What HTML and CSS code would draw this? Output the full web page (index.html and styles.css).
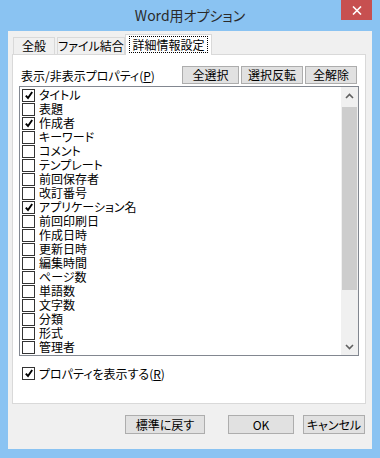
FILE: index.html
```html
<!DOCTYPE html>
<html lang="ja">
<head>
<meta charset="utf-8">
<link rel="stylesheet" href="styles.css">
</head>
<body>
<div class="window">
  <div class="titlebar">
    <span class="title">Word用オプション</span>
    <div class="close"><svg width="10" height="9" viewBox="0 0 10 9"><path d="M1 0.5 L9 8.5 M9 0.5 L1 8.5" stroke="#fff" stroke-width="1.6" fill="none"/></svg></div>
  </div>
  <div class="client">
    <div class="tabs">
      <div class="tab t1">全般</div>
      <div class="tab t2">ファイル結合</div>
      <div class="tab active"><span class="focus">詳細情報設定</span></div>
    </div>
    <div class="panel">
      <div class="toolbar">
        <span class="label">表示/非表示プロパティ(<u>P</u>)</span>
        <div class="tbtns">
          <button class="btn b-all">全選択</button>
          <button class="btn b-inv">選択反転</button>
          <button class="btn b-none">全解除</button>
        </div>
      </div>
      <div class="listbox">
        <ul class="items">
          <li><span class="cb on"></span><span class="txt">タイトル</span></li>
          <li><span class="cb"></span><span class="txt">表題</span></li>
          <li><span class="cb on"></span><span class="txt">作成者</span></li>
          <li><span class="cb"></span><span class="txt">キーワード</span></li>
          <li><span class="cb"></span><span class="txt">コメント</span></li>
          <li><span class="cb"></span><span class="txt">テンプレート</span></li>
          <li><span class="cb"></span><span class="txt">前回保存者</span></li>
          <li><span class="cb"></span><span class="txt">改訂番号</span></li>
          <li><span class="cb on"></span><span class="txt">アプリケーション名</span></li>
          <li><span class="cb"></span><span class="txt">前回印刷日</span></li>
          <li><span class="cb"></span><span class="txt">作成日時</span></li>
          <li><span class="cb"></span><span class="txt">更新日時</span></li>
          <li><span class="cb"></span><span class="txt">編集時間</span></li>
          <li><span class="cb"></span><span class="txt">ページ数</span></li>
          <li><span class="cb"></span><span class="txt">単語数</span></li>
          <li><span class="cb"></span><span class="txt">文字数</span></li>
          <li><span class="cb"></span><span class="txt">分類</span></li>
          <li><span class="cb"></span><span class="txt">形式</span></li>
          <li><span class="cb"></span><span class="txt">管理者</span></li>
        </ul>
        <div class="scrollbar">
          <div class="arrow"><svg width="9" height="6" viewBox="0 0 9 6"><path d="M1 5 L4.5 1.5 L8 5" stroke="#606060" stroke-width="1.6" fill="none"/></svg></div>
          <div class="track"><div class="thumb"></div></div>
          <div class="arrow"><svg width="9" height="6" viewBox="0 0 9 6"><path d="M1 1 L4.5 4.5 L8 1" stroke="#606060" stroke-width="1.6" fill="none"/></svg></div>
        </div>
      </div>
      <div class="showprops"><span class="cb on"></span>プロパティを表示する(<u>R</u>)</div>
    </div>
    <div class="footer">
      <button class="btn f-reset">標準に戻す</button>
      <button class="btn f-ok">OK</button>
      <button class="btn f-cancel">キャンセル</button>
    </div>
  </div>
</div>
</body>
</html>
```
FILE: styles.css
```css
* { box-sizing: border-box; }
html, body { margin: 0; padding: 0; }
body {
  font-family: "Noto Sans CJK JP", "Noto Sans", sans-serif;
  font-size: 12px;
  color: #000;
  font-feature-settings: "palt";
}
.window {
  width: 380px;
  height: 458px;
  background: #8ac3f2;
  display: flex;
  flex-direction: column;
  position: relative;
}
.titlebar {
  height: 31px;
  display: flex;
  align-items: center;
  justify-content: center;
}
.title {
  font-size: 14px;
  color: #2a2a2a;
  margin-top: -1px;
}
.close {
  position: absolute;
  top: 0;
  right: 8px;
  width: 31px;
  height: 20px;
  background: #c75050;
  display: flex;
  align-items: center;
  justify-content: center;
}
.client {
  margin: 0 8px;
  height: 418px;
  background: #f0f0f0;
  padding: 3px 6px 0 4px;
  display: flex;
  flex-direction: column;
}
.tabs {
  display: flex;
  align-items: flex-end;
  height: 20px;
  padding-left: 1px;
  position: relative;
  z-index: 1;
}
.tab {
  height: 17px;
  border: 1px solid #d9d9d9;
  border-bottom: none;
  background: #f0f0f0;
  display: flex;
  align-items: center;
  justify-content: center;
  line-height: 1;
}
.t1 { width: 42px; }
.t2 { width: 68px; margin-left: 2px; }
.tab.active {
  width: 87px;
  height: 21px;
  margin-bottom: -1px;
  margin-left: 0;
  background: #ffffff;
  border-color: #d9d9d9;
  padding-bottom: 1px;
}
.focus {
  border: 1px dotted #000;
  padding: 1px 2px;
  line-height: 13px;
}
.panel {
  height: 350px;
  border: 1px solid #d9d9d9;
  background: #ffffff;
  padding: 11px 6px 0 6px;
  display: flex;
  flex-direction: column;
}
.toolbar {
  display: flex;
  justify-content: space-between;
  align-items: center;
  height: 18px;
  padding-right: 2px;
}
.label { margin-left: 2px; margin-top: 1px; }
u { text-decoration: underline; text-underline-offset: 1px; }
.tbtns { display: flex; gap: 2px; }
.btn {
  font: inherit;
  font-feature-settings: "palt";
  background: #e1e1e1;
  border: 1px solid #adadad;
  height: 18px;
  padding: 0;
  color: #000;
  line-height: 1;
  display: flex;
  align-items: center;
  justify-content: center;
}
.b-all { width: 57px; }
.b-inv { width: 62px; }
.b-none { width: 52px; }
.listbox {
  margin-top: 2px;
  height: 270px;
  border: 1px solid #828790;
  background: #fff;
  display: flex;
}
.items {
  list-style: none;
  margin: 0;
  padding: 1px 0 0 2px;
  flex: 1;
}
.items li {
  height: 14px;
  display: flex;
  align-items: center;
  line-height: 14px;
}
.cb {
  width: 13px;
  height: 13px;
  border: 1px solid #333;
  background: #fff;
  margin-right: 4px;
  flex: none;
  position: relative;
}
.cb.on::after {
  content: "";
  position: absolute;
  left: 2px;
  top: 1px;
  width: 8px;
  height: 9px;
  background: no-repeat center/8px 9px url("data:image/svg+xml;utf8,<svg xmlns='http://www.w3.org/2000/svg' width='8' height='9' viewBox='0 0 8 9'><path d='M0.8 4.6 L3 7 L7.2 1' stroke='black' stroke-width='1.9' fill='none'/></svg>");
}
.scrollbar {
  width: 17px;
  background: #f0f0f0;
  display: flex;
  flex-direction: column;
}
.arrow {
  height: 17px;
  display: flex;
  align-items: center;
  justify-content: center;
  flex: none;
}
.track {
  flex: 1;
  padding: 3px 1px 0;
}
.thumb {
  height: 183px;
  background: #cdcdcd;
}
.showprops {
  margin-top: 10px;
  height: 14px;
  display: flex;
  align-items: center;
  padding-left: 3px;
}
.footer {
  display: flex;
  padding-top: 11px;
  padding-left: 113px;
}
.footer .btn { height: 19px; }
.f-reset { width: 80px; }
.f-ok { width: 66px; margin-left: 23px; }
.f-cancel { width: 62px; margin-left: 9px; }
```
